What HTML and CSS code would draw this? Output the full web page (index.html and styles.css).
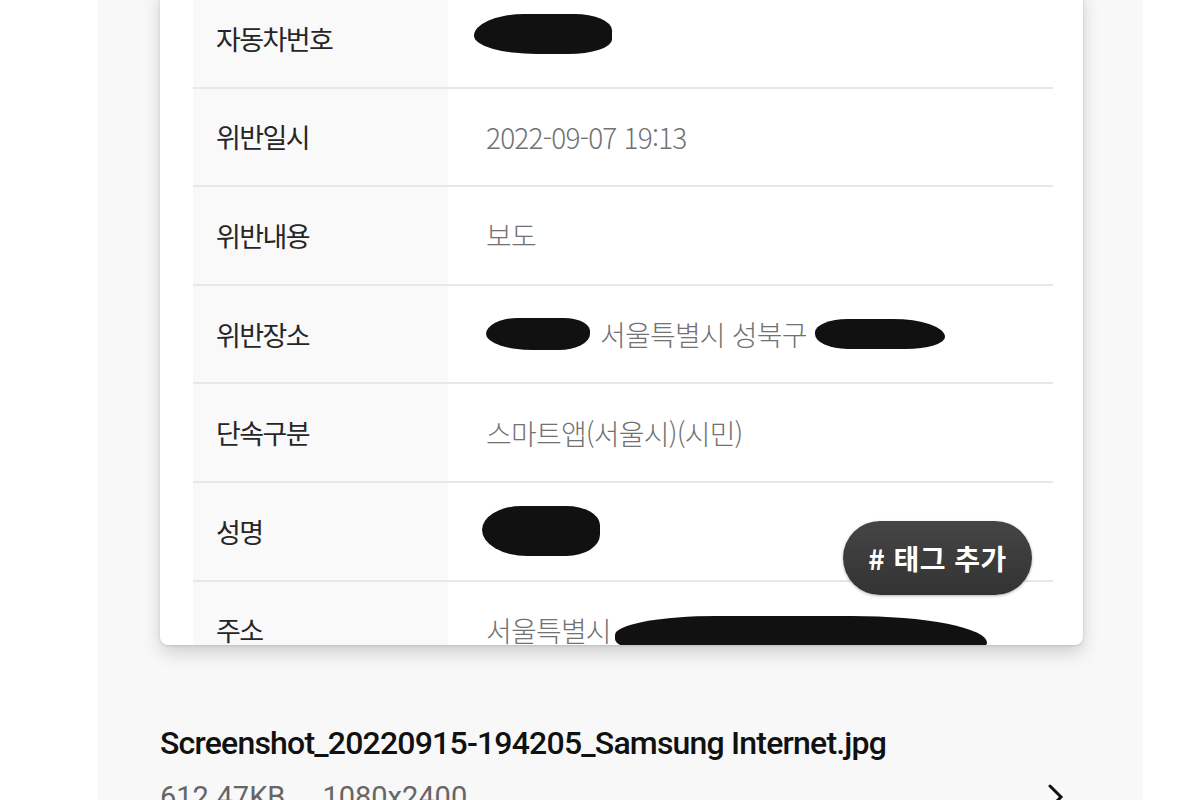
FILE: index.html
```html
<!DOCTYPE html>
<html lang="ko">
<head>
<meta charset="utf-8">
<title>위반 내역</title>
<link rel="stylesheet" href="styles.css">
</head>
<body>
<main class="panel">
  <section class="card">
    <div class="row">
      <div class="label">자동차번호</div>
      <div class="value"><span class="redact r-plate"></span></div>
    </div>
    <div class="row">
      <div class="label">위반일시</div>
      <div class="value">2022-09-07 19:13</div>
    </div>
    <div class="row">
      <div class="label">위반내용</div>
      <div class="value">보도</div>
    </div>
    <div class="row">
      <div class="label">위반장소</div>
      <div class="value"><span class="redact r-place1"></span>서울특별시 성북구<span class="redact r-place2"></span></div>
    </div>
    <div class="row">
      <div class="label">단속구분</div>
      <div class="value">스마트앱(서울시)(시민)</div>
    </div>
    <div class="row">
      <div class="label">성명</div>
      <div class="value"><span class="redact r-name"></span></div>
    </div>
    <div class="row">
      <div class="label">주소</div>
      <div class="value">서울특별시<span class="redact r-addr"></span></div>
    </div>
    <button class="tag-btn" type="button"># 태그 추가</button>
  </section>

  <section class="file">
    <div class="file-name">Screenshot_20220915-194205_Samsung Internet.jpg</div>
    <div class="file-meta">
      <span>612.47KB</span><span>1080x2400</span>
      <svg class="chev" width="22" height="30" viewBox="0 0 22 30"><path d="M5 4 L16 15 L5 26" fill="none" stroke="#111" stroke-width="3" stroke-linecap="round"/></svg>
    </div>
  </section>
</main>
</body>
</html>
```

FILE: styles.css
```css
html, body {
  margin: 0;
  padding: 0;
  background: #ffffff;
  height: 800px;
  overflow: hidden;
  font-family: "Noto Sans CJK KR", "Noto Sans", sans-serif;
}

.panel {
  display: flow-root;
  margin-left: 98px;
  width: 1045px;
  height: 800px;
  background: #f8f8f8;
}

.card {
  position: relative;
  margin: -10px 60px 0 62px;
  height: 655px;
  background: #ffffff;
  border-radius: 0 0 8px 8px;
  box-shadow: 0 8px 18px rgba(0, 0, 0, 0.16), 0 1px 3px rgba(0, 0, 0, 0.12);
  padding: 0 30px 0 33px;
  overflow: hidden;
}

.row {
  display: grid;
  grid-template-columns: 255px 1fr;
  height: 98.6px;
  box-sizing: border-box;
  border-bottom: 2px solid #e7e7e7;
}

.label {
  display: flex;
  align-items: center;
  padding-left: 23px;
  background: #f9f9f9;
  color: #262626;
  font-size: 27px;
  font-weight: 400;
  letter-spacing: -1.6px;
}

.value {
  display: flex;
  align-items: center;
  padding-left: 38px;
  color: #727272;
  font-size: 28px;
  font-weight: 300;
  letter-spacing: -0.8px;
}

.redact {
  display: inline-block;
  background: #111111;
}

.r-plate {
  width: 138px;
  height: 40px;
  margin-left: -12px;
  margin-top: -8px;
  border-radius: 40% 30% 35% 50% / 60% 45% 40% 50%;
}

.r-place1 {
  width: 104px;
  height: 32px;
  margin-right: 10px;
  border-radius: 30% 25% 30% 45% / 50% 40% 50% 50%;
}

.r-place2 {
  width: 130px;
  height: 30px;
  margin-left: 8px;
  border-radius: 25% 40% 30% 25% / 45% 60% 40% 50%;
}

.r-name {
  width: 118px;
  height: 50px;
  margin-left: -4px;
  border-radius: 35% 30% 30% 40% / 50% 40% 45% 55%;
}

.r-addr {
  width: 372px;
  height: 42px;
  margin-left: 4px;
  margin-top: 14px;
  border-radius: 30% 40% 25% 30% / 50% 70% 40% 50%;
}

.tag-btn {
  position: absolute;
  left: 683px;
  top: 531px;
  width: 189px;
  height: 74px;
  border: 0;
  border-radius: 37px;
  background: linear-gradient(#454545, #333333);
  color: #ffffff;
  font-family: "Noto Sans CJK KR", sans-serif;
  font-size: 28px;
  font-weight: 700;
  letter-spacing: 0.5px;
  box-shadow: 0 1px 3px rgba(0, 0, 0, 0.3);
}

.file {
  padding: 78px 0 0 62px;
}

.file-name {
  font-family: Roboto, "Noto Sans", sans-serif;
  font-size: 32px;
  font-weight: 500;
  color: #111111;
  letter-spacing: -0.8px;
  line-height: 40px;
}

.file-meta {
  display: flex;
  align-items: center;
  gap: 37px;
  margin-top: 14px;
  width: 923px;
  font-family: Roboto, "Noto Sans", sans-serif;
  font-size: 29px;
  color: #666666;
  line-height: 40px;
}

.chev {
  margin-left: auto;
  margin-right: 16px;
}
```
